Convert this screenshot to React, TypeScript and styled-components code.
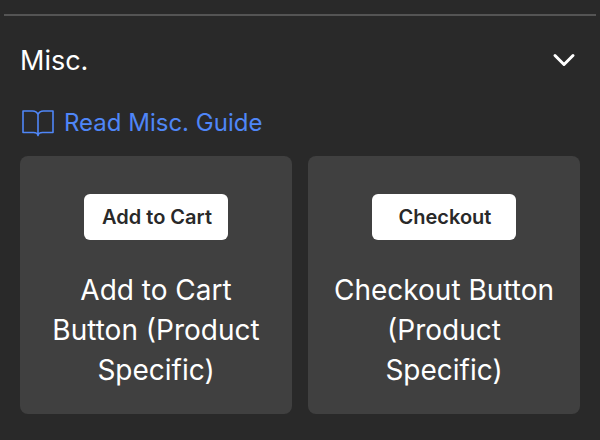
import React from "react";
import styled, { createGlobalStyle } from "styled-components";

const GlobalStyle = createGlobalStyle`
  * { box-sizing: border-box; }
  body {
    margin: 0;
    background: #292929;
    color: #ffffff;
    font-family: Inter, "Liberation Sans", sans-serif;
  }
`;

const Panel = styled.section`
  padding: 14px 4px 26px;
`;

const Divider = styled.hr`
  height: 2px;
  margin: 0;
  border: 0;
  background: #545454;
`;

const Content = styled.div`
  padding: 24px 16px 0;
`;

const Title = styled.h2`
  margin: 0;
  font-size: 27px;
  font-weight: 400;
  line-height: 42px;
`;

const Toggle = styled.button`
  display: flex;
  align-items: center;
  justify-content: space-between;
  width: 100%;
  padding: 0 4px 0 0;
  border: 0;
  background: none;
  color: inherit;
  font: inherit;
  cursor: pointer;
`;

const GuideLink = styled.a`
  display: flex;
  align-items: center;
  gap: 10px;
  width: fit-content;
  margin-top: 25px;
  padding-left: 2px;
  color: #4f86f7;
  font-size: 24px;
  line-height: 32px;
  text-decoration: none;
`;

const Grid = styled.div`
  display: grid;
  grid-template-columns: 1fr 1fr;
  gap: 16px;
  margin-top: 17px;
`;

const Card = styled.article`
  display: flex;
  flex-direction: column;
  align-items: center;
  padding: 38px 24px 24px;
  border-radius: 8px;
  background: #404040;
`;

const PreviewButton = styled.button`
  width: 144px;
  height: 46px;
  padding: 0 0 0 2px;
  border: 0;
  border-radius: 6px;
  background: #ffffff;
  color: #292929;
  font: inherit;
  font-size: 20px;
  font-weight: 600;
`;

const Caption = styled.p`
  margin: 30px 0 0;
  font-size: 28px;
  line-height: 40px;
  text-align: center;
`;

const items = [
  { action: "Add to Cart", caption: "Add to Cart Button (Product Specific)" },
  { action: "Checkout", caption: "Checkout Button (Product Specific)" },
];

export default function App() {
  return (
    <Panel>
      <GlobalStyle />
      <Divider />
      <Content>
        <Title>
          <Toggle aria-expanded="true">
            Misc.
            <svg width="24" height="24" viewBox="0 0 24 24" fill="none" stroke="currentColor" strokeWidth="3" strokeLinecap="round" strokeLinejoin="round" aria-hidden="true">
              <path d="M3 6.500l9 9 9-9" />
            </svg>
          </Toggle>
        </Title>
        <GuideLink href="#misc-guide">
          <svg width="32" height="28" viewBox="0 0 32 28" fill="none" stroke="currentColor" strokeLinejoin="round" aria-hidden="true">
            <path strokeWidth="1.6" d="M16 5.500C15 3 13 2 10.500 2H1V23.500h10.500c2.500 0 4 .5 4.500 3 .5-2.500 2-3 4.500-3H31V2h-9.500C19 2 17 3 16 5.500zM16 5.500v21" />
          </svg>
          Read Misc. Guide
        </GuideLink>
        <Grid>
          {items.map((item) => (
            <Card key={item.action}>
              <PreviewButton>{item.action}</PreviewButton>
              <Caption>{item.caption}</Caption>
            </Card>
          ))}
        </Grid>
      </Content>
    </Panel>
  );
}
